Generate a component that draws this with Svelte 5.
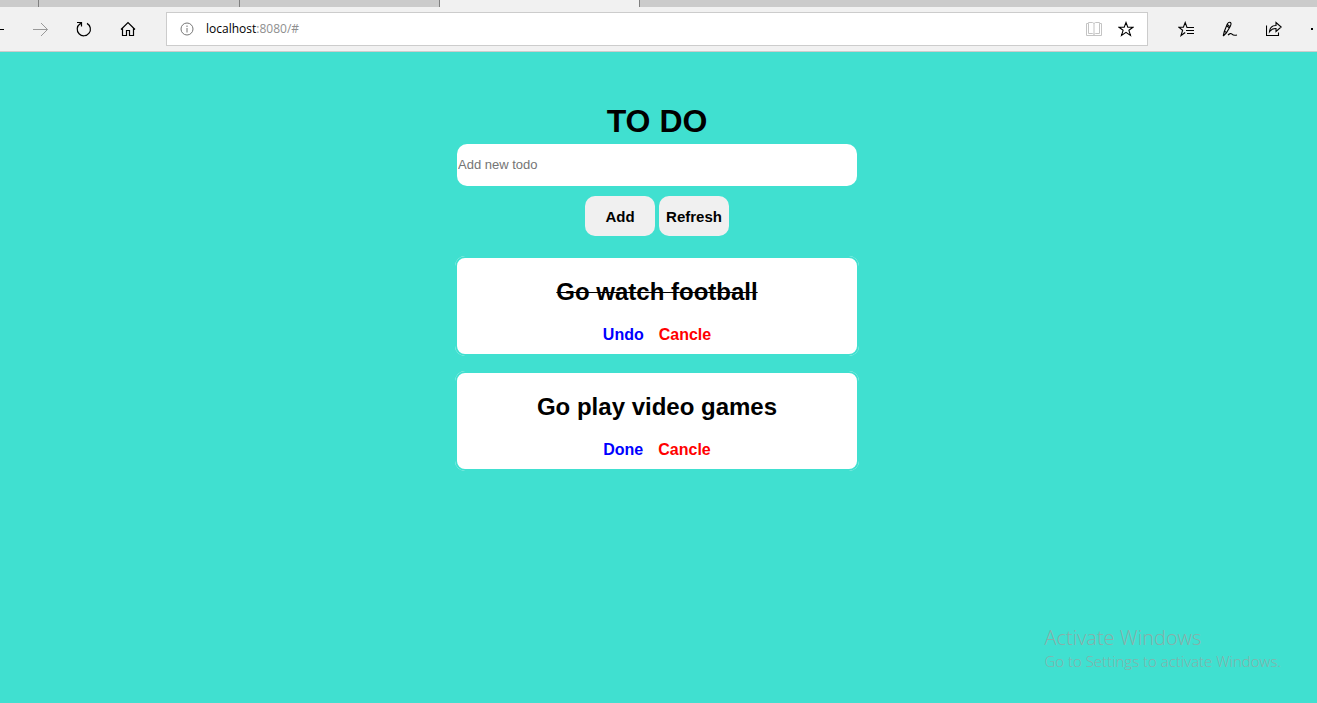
<script>
  let draft = $state('');
  let todos = $state([
    { id: 1, title: 'Go watch football', done: true },
    { id: 2, title: 'Go play video games', done: false }
  ]);

  function add(event) {
    event.preventDefault();
    const title = draft.trim();
    if (!title) return;
    todos.push({ id: Date.now(), title, done: false });
    draft = '';
  }

  function remove(event, id) {
    event.preventDefault();
    todos = todos.filter((todo) => todo.id !== id);
  }

  function toggle(event, todo) {
    event.preventDefault();
    todo.done = !todo.done;
  }
</script>

<div class="window">
  <header>
    <div class="tabs">
      <span class="tab first"></span>
      <span class="tab second"></span>
      <span class="tab"></span>
      <span class="tab active"></span>
    </div>
    <div class="toolbar">
      <nav class="nav">
        <button class="back" aria-label="Back">
          <svg width="4" height="16" viewBox="0 0 4 16"><path d="M0 8.5H4" stroke="#000" /></svg>
        </button>
        <button aria-label="Forward">
          <svg width="16" height="16" viewBox="0 0 16 16"><path d="M1 8.5H15.5M9 2L15.5 8.5L9 15" fill="none" stroke="#999" /></svg>
        </button>
        <button aria-label="Reload">
          <svg width="16" height="16" viewBox="0 0 16 16"><path d="M4 2.8A6.6 6.6 0 1 0 11 2.4M1 1.5H5.5V5.5M5.5 1.5L3.5 3.6" fill="none" stroke="#000" stroke-width="1.2" /></svg>
        </button>
        <button aria-label="Home">
          <svg width="16" height="16" viewBox="0 0 16 16"><path d="M1 8.5L8 1.5L15 8.5M2.5 7.5V14.5H6.5V9.5H9.5V14.5H13.5V7.5" fill="none" stroke="#000" stroke-width="1.2" /></svg>
        </button>
      </nav>
      <div class="address">
        <svg width="14" height="14" viewBox="0 0 14 14"><circle cx="7" cy="7" r="6" fill="none" stroke="#777" /><path d="M7 3.5V5M7 6V10.5" stroke="#777" /></svg>
        <span class="url">localhost<span class="rest">:8080/#</span></span>
        <button aria-label="Reading view">
          <svg width="16" height="16" viewBox="0 0 16 16"><path d="M8 2.5V13M.5 2.5H2.5V1.5H6.5L8 2.5L9.5 1.5H13.5V2.5H15.5V14.5H.5ZM2.5 2.5V12.5H6.5L8 13.5L9.5 12.5H13.5V2.5" fill="none" stroke="#c4c4c4" /></svg>
        </button>
        <button aria-label="Add to favorites">
          <svg width="16" height="16" viewBox="0 0 16 16"><path d="M8 1.5L9.8 6.2H15L10.9 9.3L12.5 14.5L8 11.4L3.5 14.5L5.1 9.3L1 6.2H6.2Z" fill="none" stroke="#000" stroke-width="1.1" /></svg>
        </button>
      </div>
      <div class="tools">
        <button aria-label="Hub">
          <svg width="16" height="16" viewBox="0 0 16 16"><path d="M13 6.5H9L7.2 1.5L5.4 6.2H.8L4.6 9.3L3 14.5L7.2 11.5M9 6.5H16M8 9.5H16M9 12.5H16" fill="none" stroke="#000" stroke-width="1.1" /></svg>
        </button>
        <button aria-label="Make a web note">
          <svg width="16" height="16" viewBox="0 0 16 16"><path d="M1.2 15L2.3 10.5L5.3 3Q6.8 .6 8.6 1.6Q9.6 2.8 8.2 5.6L4.4 11.8L1.2 15M5.3 3.4L8 5.6M4.8 5L7.4 6.8M2.5 10.2L4.6 11.6M6 14Q8.5 11.6 10 13.2T15 14" fill="none" stroke="#000" stroke-width="1.1" /></svg>
        </button>
        <button aria-label="Share">
          <svg width="16" height="16" viewBox="0 0 16 16"><path d="M.5 4.5V14.5H12.5V11.5M3.5 10.8Q4 4.5 10 4.5V1.5L15.2 6L10 10.5V7.5Q6 7.2 3.5 10.8Z" fill="none" stroke="#000" stroke-width="1.1" /></svg>
        </button>
        <button class="more" aria-label="More">
          <svg width="6" height="16" viewBox="0 0 6 16"><path d="M1 7H3V9H1Z" fill="#000" /></svg>
        </button>
      </div>
    </div>
  </header>

  <main>
    <h1>TO DO</h1>
    <form onsubmit={add}>
      <input type="text" placeholder="Add new todo" aria-label="Add new todo" bind:value={draft} />
      <div class="buttons">
        <button type="submit">Add</button>
        <button type="button" onclick={() => location.reload()}>Refresh</button>
      </div>
    </form>
    <ul>
      {#each todos as todo (todo.id)}
        <li>
          <h2 class:done={todo.done}>{todo.title}</h2>
          <div class="actions">
            <a class="toggle" href="#toggle" onclick={(e) => toggle(e, todo)}>{todo.done ? 'Undo' : 'Done'}</a>
            <a class="cancel" href="#cancel" onclick={(e) => remove(e, todo.id)}>Cancle</a>
          </div>
        </li>
      {/each}
    </ul>
  </main>

  <aside>
    <p class="notice">Activate Windows</p>
    <p>Go to Settings to activate Windows.</p>
  </aside>
</div>

<style>
  :global(body) {
    margin: 0;
    background: #40e0d0;
    font-family: "Liberation Sans", Arial, sans-serif;
  }

  .window {
    position: relative;
    min-height: 100vh;
    overflow: hidden;
  }

  header {
    background: #f1f1f1;
    border-bottom: 1px solid #ccc;
  }

  .tabs {
    display: flex;
    height: 7px;
    background: #cbcbcb;
  }

  .tab {
    box-sizing: border-box;
    width: 200px;
    border-right: 1px solid #808080;
  }

  .tab.first {
    width: 39px;
  }

  .tab.second {
    width: 201px;
  }

  .tab.active {
    background: #f1f1f1;
  }

  .toolbar {
    display: flex;
    align-items: center;
    height: 44px;
  }

  .toolbar button {
    display: flex;
    padding: 0;
    border: 0;
    background: none;
  }

  .toolbar svg {
    flex: none;
  }

  .nav {
    display: flex;
    gap: 28px;
    width: 166px;
    flex: none;
  }

  .address {
    box-sizing: border-box;
    display: flex;
    align-items: center;
    flex: 1;
    gap: 16px;
    height: 34px;
    padding: 0 13px;
    border: 1px solid #ccc;
    background: #fff;
  }

  .url {
    flex: 1;
    margin-left: -4px;
    font: 12px/18px "Open Sans", "Noto Sans", sans-serif;
    color: #000;
  }

  .rest {
    color: #8f8f8f;
  }

  .tools {
    display: flex;
    gap: 28px;
    padding: 0 1px 0 30px;
  }

  main {
    display: flex;
    flex-direction: column;
    align-items: center;
    padding: 50px 3px 0 0;
  }

  h1 {
    margin: 0;
    font-size: 32px;
    line-height: 38px;
  }

  form,
  ul {
    width: 100%;
    max-width: 400px;
  }

  form {
    margin-top: 4px;
  }

  input {
    box-sizing: border-box;
    display: block;
    width: 100%;
    height: 42px;
    padding: 0 1px 2px;
    border: 0;
    border-radius: 10px;
    background: #fff;
    font: 13px "Liberation Sans", Arial, sans-serif;
  }

  input::placeholder {
    color: #757575;
  }

  .buttons {
    display: flex;
    justify-content: center;
    gap: 4px;
    margin-top: 10px;
  }

  .buttons button {
    width: 70px;
    height: 40px;
    padding: 0;
    border: 0;
    border-radius: 10px;
    background: #f0f0f0;
    color: #000;
    font: bold 15px "Liberation Sans", Arial, sans-serif;
  }

  ul {
    display: grid;
    gap: 15px;
    max-width: 404px;
    margin: 20px 0 0;
    padding: 0;
    list-style: none;
  }

  li {
    border-radius: 10px;
    background: #fff;
    box-shadow: inset 0 0 0 2px #40e0d0;
    padding: 22px 0 12px;
    text-align: center;
  }

  h2 {
    margin: 0;
    font-size: 24px;
    line-height: 28px;
  }

  .done {
    text-decoration: line-through;
    text-decoration-thickness: 1px;
  }

  .actions {
    display: flex;
    justify-content: center;
    gap: 15px;
    margin-top: 20px;
  }

  a {
    font-size: 16px;
    font-weight: bold;
    line-height: 18px;
    text-decoration: none;
  }

  .toggle {
    color: #00f;
  }

  .cancel {
    color: #f00;
  }

  aside {
    position: absolute;
    right: 36px;
    bottom: 32px;
    color: #8aaea8;
    font-family: "Open Sans", "Noto Sans", sans-serif;
    font-weight: 300;
  }

  p {
    margin: 0;
    font-size: 15px;
    line-height: 20px;
  }

  .notice {
    font-size: 20px;
    line-height: 26px;
  }
</style>
